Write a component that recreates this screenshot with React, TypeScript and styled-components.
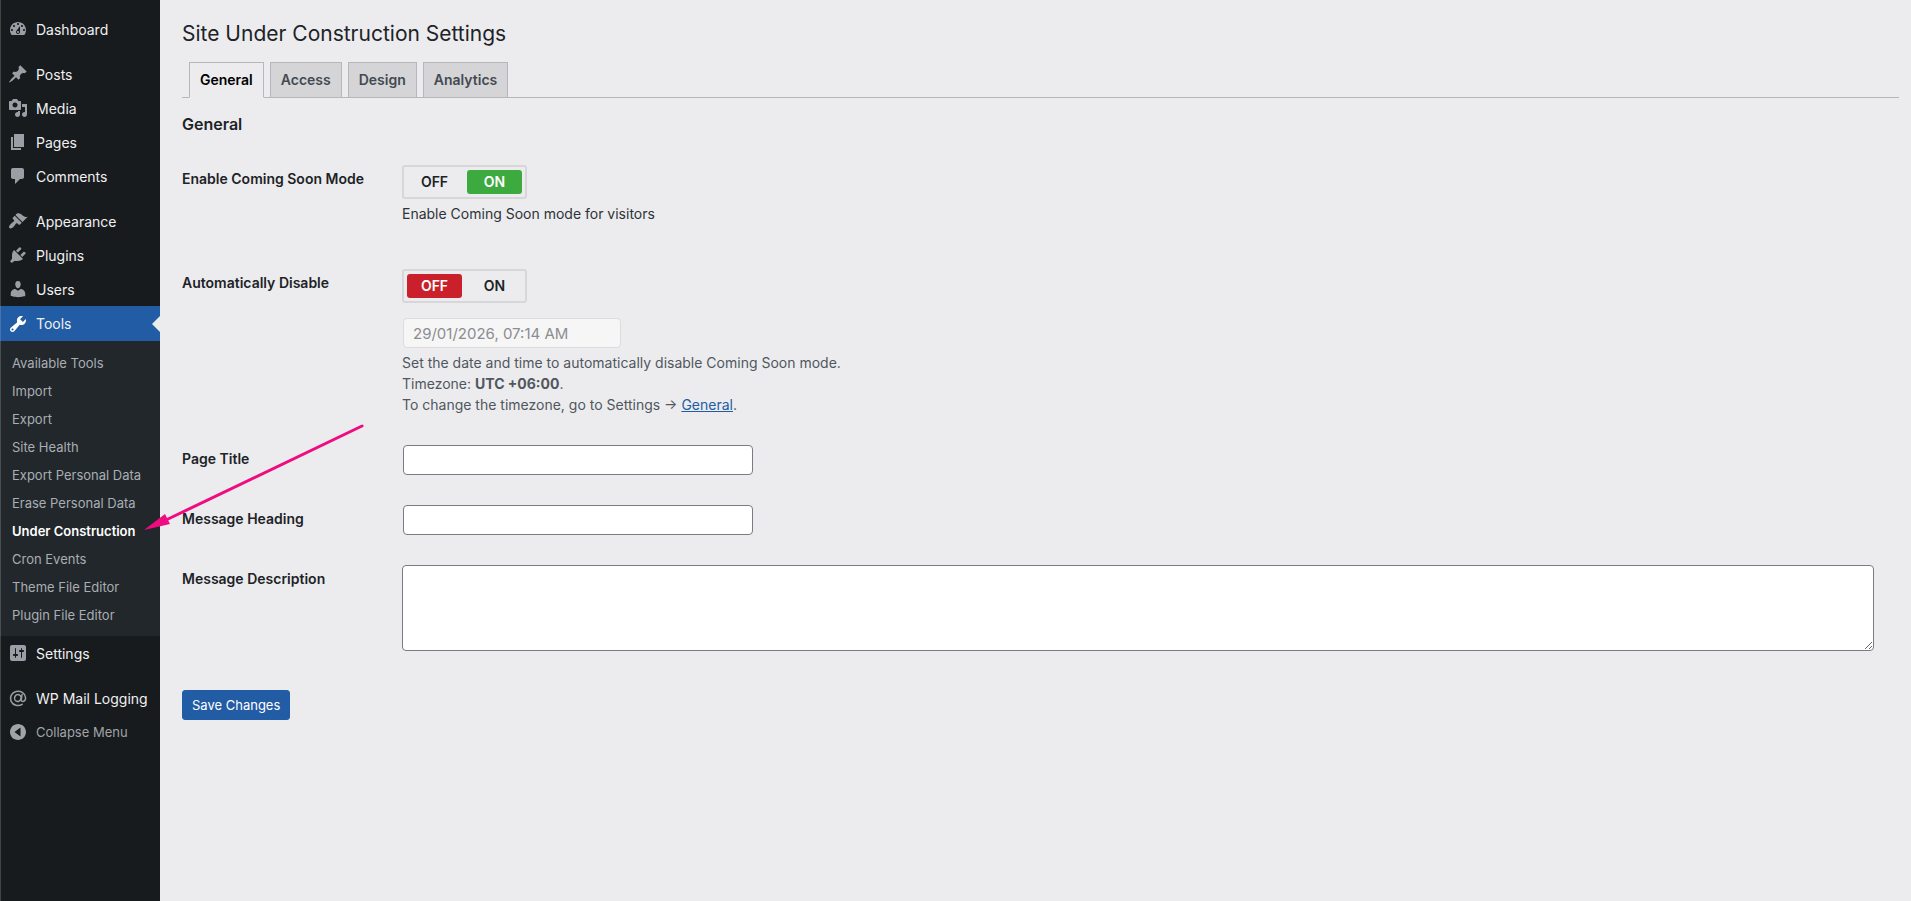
import React, { useState } from "react";
import styled, { createGlobalStyle, css } from "styled-components";

const GlobalStyle = createGlobalStyle`
  *, *::before, *::after { box-sizing: border-box; }
  body {
    margin: 0;
    background: #ececee;
    color: #1d2327;
    font-family: Inter, "Liberation Sans", sans-serif;
    font-size: 14px;
    line-height: 21px;
  }
  button, input, textarea { font: inherit; }
`;

const Layout = styled.div`
  display: flex;
  min-height: 100vh;
`;

/* ---------- Sidebar ---------- */

const Sidebar = styled.nav`
  position: relative;
  z-index: 1;
  flex: 0 0 160px;
  padding-top: 12px;
  background: #171b1e;

  &::after {
    content: "";
    position: absolute;
    inset: 0 auto 0 0;
    width: 1px;
    background: rgba(160, 170, 178, 0.3);
  }
`;

const MenuGroup = styled.ul`
  margin: 0 0 11px;
  padding: 0;
  list-style: none;
`;

const entryStyle = css`
  display: flex;
  align-items: center;
  gap: 8px;
  width: 100%;
  padding: 0 0 0 8px;
  border: 0;
  text-align: left;
  white-space: nowrap;
`;

const MenuLink = styled.a<{ $current?: boolean }>`
  ${entryStyle}
  position: relative;
  height: ${(p) => (p.$current ? "35px" : "34px")};
  color: #f0f0f1;
  background: ${(p) => (p.$current ? "#215ca5" : "transparent")};
  text-decoration: none;

  svg { color: ${(p) => (p.$current ? "#fff" : "#999fa5")}; }

  ${(p) =>
    p.$current &&
    css`
      &::after {
        content: "";
        position: absolute;
        top: 10px;
        right: 0;
        border: 8px solid transparent;
        border-left-width: 0;
        border-right-color: #ececee;
      }
    `}
`;

const CollapseButton = styled.button`
  ${entryStyle}
  height: 34px;
  background: none;
  color: #a0a4a8;
  font-size: 13px;
  cursor: pointer;
`;

const Icon = styled.svg`
  flex: none;
  width: 20px;
  height: 20px;
  fill: currentColor;
`;

const Submenu = styled.ul`
  margin: 0;
  padding: 8px 0 7px;
  background: #22272b;
  list-style: none;
`;

const SubmenuItem = styled.li`
  position: relative;
`;

const SubmenuLink = styled.a<{ $current?: boolean }>`
  display: block;
  padding-left: 12px;
  color: ${(p) => (p.$current ? "#fff" : "#a9aeb3")};
  font-size: 13px;
  font-weight: ${(p) => (p.$current ? 600 : 400)};
  line-height: 28px;
  text-decoration: none;
  white-space: nowrap;
`;

const Pointer = styled.svg`
  position: absolute;
  bottom: 13px;
  left: 144px;
  width: 222px;
  height: 110px;
  pointer-events: none;
`;

/* ---------- Main column ---------- */

const Main = styled.main`
  flex: 1;
  min-width: 0;
  padding: 19px 12px 40px 22px;
`;

const Title = styled.h1`
  margin: 0 0 13px;
  font-size: 21px;
  font-weight: 400;
  line-height: 30px;
`;

const Tabs = styled.nav`
  display: flex;
  gap: 6px;
  padding-left: 7px;
  border-bottom: 1px solid #b6b7ba;
`;

const Tab = styled.a<{ $active?: boolean }>`
  margin-bottom: ${(p) => (p.$active ? "-1px" : "0")};
  padding: 5px 10px;
  border: 1px solid #b6b7ba;
  border-bottom: ${(p) => (p.$active ? "1px solid #ececee" : "0")};
  background: ${(p) => (p.$active ? "#ececee" : "#d5d5d7")};
  color: ${(p) => (p.$active ? "#000" : "#434a51")};
  font-weight: 600;
  line-height: 24px;
  text-decoration: none;
`;

const SectionTitle = styled.h2`
  margin: 16px 0 31px;
  font-size: 16px;
  font-weight: 600;
  line-height: 20px;
`;

const Fields = styled.div`
  display: grid;
  gap: 30px;
  padding-right: 25px;
`;

const Row = styled.div`
  display: grid;
  grid-template-columns: 220px minmax(0, 1fr);
`;

const labelStyle = css`
  padding-top: 4px;
  font-weight: 600;
  line-height: 20px;
`;

const FieldLabel = styled.label`
  ${labelStyle}
`;

const FieldHeading = styled.span`
  ${labelStyle}
`;

const Control = styled.div<{ $roomy?: boolean }>`
  display: flex;
  flex-direction: column;
  align-items: flex-start;
  padding-bottom: ${(p) => (p.$roomy ? "15px" : "0")};
`;

const Switch = styled.div`
  display: flex;
  gap: 5px;
  padding: 3px;
  border: 2px solid #d7d7d9;
  border-radius: 3px;
`;

const SwitchOption = styled.label<{ $tone: string }>`
  position: relative;
  width: 55px;
  border-radius: 3px;
  font-weight: 600;
  line-height: 24px;
  text-align: center;
  cursor: pointer;

  &:has(input:checked) {
    background: ${(p) => p.$tone};
    color: #fff;
  }

  input {
    position: absolute;
    inset: 0;
    margin: 0;
    opacity: 0;
    cursor: pointer;
  }
`;

const Note = styled.p<{ $muted?: boolean }>`
  margin: 4px 0 0;
  color: ${(p) => (p.$muted ? "#50575e" : "#2c3338")};
`;

const NoteLink = styled.a`
  color: #215ca5;
`;

const TextField = styled.input`
  width: 350px;
  max-width: 100%;
  height: 30px;
  margin: 0 1px;
  padding: 0 8px;
  border: 1px solid #7b7c82;
  border-radius: 4px;
  background: #fff;
`;

const DateField = styled(TextField)`
  width: 218px;
  margin-top: 15px;
  padding: 0 9px;
  border-color: #dcdcde;
  background: #f6f6f6;
  color: #8b8d90;
  font-size: 15px;
`;

const TextArea = styled.textarea`
  width: 100%;
  height: 86px;
  padding: 2px 6px;
  border: 1px solid #7b7c82;
  border-radius: 4px;
  background: #fff;
  resize: vertical;
`;

const SaveButton = styled.button`
  height: 30px;
  margin-top: 39px;
  padding: 0 9px;
  border: 1px solid #215ca5;
  border-radius: 3px;
  background: #215ca5;
  color: #fff;
  font-size: 13px;
  cursor: pointer;
`;

/* ---------- Data ---------- */

const icons = {
  dashboard:
    "M3.76 16h12.48c1.1-1.37 1.76-3.11 1.76-5 0-4.42-3.58-8-8-8s-8 3.58-8 8c0 1.89.66 3.63 1.76 5zM10 4c.55 0 1 .45 1 1s-.45 1-1 1-1-.45-1-1 .45-1 1-1zM6 6c.55 0 1 .45 1 1s-.45 1-1 1-1-.45-1-1 .45-1 1-1zm8 0c.55 0 1 .45 1 1s-.45 1-1 1-1-.45-1-1 .45-1 1-1zm-5.37 5.55L12 7v6c0 1.1-.9 2-2 2s-2-.9-2-2c0-.57.24-1.08.63-1.45zM4 10c.55 0 1 .45 1 1s-.45 1-1 1-1-.45-1-1 .45-1 1-1zm12 0c.55 0 1 .45 1 1s-.45 1-1 1-1-.45-1-1 .45-1 1-1zm-5 3c0-.55-.45-1-1-1s-1 .45-1 1 .45 1 1 1 1-.45 1-1z",
  posts:
    "M10.44 3.02l1.82-1.82 6.36 6.35-1.83 1.82c-1.05-.68-2.48-.57-3.41.36l-.75.75c-.92.93-1.04 2.35-.35 3.41l-1.83 1.82-2.41-2.41-2.8 2.79c-.42.42-3.38 2.71-3.8 2.29s1.86-3.39 2.28-3.81l2.79-2.79L4.1 9.36l1.83-1.82c1.05.69 2.48.57 3.4-.36l.75-.75c.93-.92 1.05-2.35.36-3.41z",
  media:
    "M13 11V4c0-.55-.45-1-1-1h-1.67L9 1H5L3.67 3H2c-.55 0-1 .45-1 1v7c0 .55.45 1 1 1h10c.55 0 1-.45 1-1zM7 4.5c1.38 0 2.5 1.12 2.5 2.5S8.38 9.5 7 9.5 4.5 8.38 4.5 7 5.62 4.5 7 4.5zM14 6h5v10.5c0 1.38-1.12 2.5-2.5 2.5S14 17.88 14 16.5s1.12-2.5 2.5-2.5c.17 0 .34.02.5.05V9h-3V6zm-4 8.05V13h2v3.5c0 1.38-1.12 2.5-2.5 2.5S7 17.88 7 16.5 8.12 14 9.5 14c.17 0 .34.02.5.05z",
  pages: "M6 15V2h10v13H6zm-1 1h8v2H3V5h2v11z",
  comments:
    "M5 2h9c1.1 0 2 .9 2 2v7c0 1.1-.9 2-2 2h-2l-5 5v-5H5c-1.1 0-2-.9-2-2V4c0-1.1.9-2 2-2z",
  appearance:
    "M14.48 11.06L7.41 3.99l1.5-1.5c.5-.56 2.3-.47 3.51.32 1.21.8 1.43 1.28 2.91 2.1 1.18.64 2.45 1.26 4.45.85zm-.71.71L6.7 4.7 4.93 6.47c-.39.39-.39 1.02 0 1.41l1.06 1.06c.39.39.39 1.03 0 1.42-.6.6-1.43 1.11-2.21 1.69-.35.26-.7.53-1.01.84C1.43 14.23.4 16.08 1.4 17.07c.99 1 2.84-.03 4.18-1.36.31-.31.58-.66.85-1.02.57-.78 1.08-1.61 1.69-2.21.39-.39 1.02-.39 1.41 0l1.06 1.06c.39.39 1.02.39 1.41 0z",
  plugins:
    "M13.11 4.36L9.87 7.6 8 5.73l3.24-3.24c.35-.34 1.05-.2 1.56.32.52.51.66 1.21.31 1.55zm-8 1.77l.91-1.12 9.01 9.01-1.19.84c-.71.71-2.63 1.16-3.82 1.16H6.14L4.9 17.26c-.59.59-1.54.59-2.12 0-.59-.58-.59-1.53 0-2.12l1.24-1.24v-3.88c0-1.13.4-3.19 1.09-3.89zm7.26 3.97l3.24-3.24c.34-.35 1.04-.21 1.55.31.52.51.66 1.21.31 1.55l-3.24 3.25z",
  users:
    "M10 9.25c-2.27 0-2.73-3.44-2.73-3.44C7 4.02 7.82 2 9.97 2c2.16 0 2.98 2.02 2.71 3.81 0 0-.41 3.44-2.68 3.44zm0 2.57L12.72 10c2.39 0 4.52 2.33 4.52 4.53v2.49s-3.65 1.13-7.24 1.13c-3.65 0-7.24-1.13-7.24-1.13v-2.49c0-2.25 1.94-4.48 4.47-4.48z",
  tools:
    "M16.68 9.77c-1.34 1.34-3.3 1.67-4.95.99l-5.41 6.52c-.99.99-2.59.99-3.58 0s-.99-2.59 0-3.57l6.52-5.42c-.68-1.65-.35-3.61.99-4.95 1.28-1.28 3.12-1.62 4.72-1.06l-2.89 2.89 2.82 2.82 2.86-2.87c.53 1.58.18 3.39-1.08 4.65zM3.81 16.21c.4.39 1.04.39 1.43 0 .4-.4.4-1.04 0-1.43-.39-.4-1.03-.4-1.43 0-.39.39-.39 1.03 0 1.43z",
  settings:
    "M18 16V4c0-1.1-.9-2-2-2H4c-1.1 0-2 .9-2 2v12c0 1.1.9 2 2 2h12c1.1 0 2-.9 2-2zM8 11h1c.55 0 1 .45 1 1s-.45 1-1 1H8v1.5c0 .28-.22.5-.5.5s-.5-.22-.5-.5V13H6c-.55 0-1-.45-1-1s.45-1 1-1h1V5.5c0-.28.22-.5.5-.5s.5.22.5.5V11zm5-2h-1c-.55 0-1-.45-1-1s.45-1 1-1h1V5.5c0-.28.22-.5.5-.5s.5.22.5.5V7h1c.55 0 1 .45 1 1s-.45 1-1 1h-1v5.5c0 .28-.22.5-.5.5s-.5-.22-.5-.5V9z",
  collapse: "M10 2c4.42 0 8 3.58 8 8s-3.58 8-8 8-8-3.58-8-8 3.58-8 8-8zM12.5 5.5L6.5 10l6 4.5z",
};

type IconName = keyof typeof icons;

const contentMenu: [IconName, string][] = [
  ["posts", "Posts"],
  ["media", "Media"],
  ["pages", "Pages"],
  ["comments", "Comments"],
];

const siteMenu: [IconName, string][] = [
  ["appearance", "Appearance"],
  ["plugins", "Plugins"],
  ["users", "Users"],
];

const toolsMenu = [
  "Available Tools",
  "Import",
  "Export",
  "Site Health",
  "Export Personal Data",
  "Erase Personal Data",
  "Under Construction",
  "Cron Events",
  "Theme File Editor",
  "Plugin File Editor",
];

/* ---------- Pieces ---------- */

function Glyph({ name }: { name: IconName }) {
  return (
    <Icon viewBox="0 0 20 20" aria-hidden="true">
      <path fillRule="evenodd" d={icons[name]} />
    </Icon>
  );
}

function MailGlyph() {
  return (
    <Icon viewBox="0 0 20 20" aria-hidden="true">
      <g fill="none" stroke="currentColor" strokeWidth="1.5" strokeLinecap="round">
        <path d="M14.2 16.4A7.6 7.2 0 1 1 17.6 9.6C17.6 12 16.4 13.4 14.9 13.4 13.6 13.4 13.1 12.6 13.3 11.4L14 6.6" />
        <ellipse cx="9.8" cy="10" rx="3.2" ry="3.5" transform="rotate(18 9.8 10)" />
      </g>
    </Icon>
  );
}

function MenuEntry({ icon, label }: { icon: IconName; label: string }) {
  return (
    <li>
      <MenuLink href="#">
        <Glyph name={icon} />
        {label}
      </MenuLink>
    </li>
  );
}

function PointerArrow() {
  return (
    <Pointer viewBox="0 0 222 110" aria-hidden="true">
      <path d="M218 4L22 98" stroke="#ee0c80" strokeWidth="3" strokeLinecap="round" />
      <path d="M0 108L21 92L26 102Z" fill="#ee0c80" />
    </Pointer>
  );
}

function OnOffSwitch({ name, title, initial }: { name: string; title: string; initial: boolean }) {
  const [on, setOn] = useState(initial);
  return (
    <Switch role="radiogroup" aria-label={title}>
      <SwitchOption $tone="#c9202b">
        <input type="radio" name={name} checked={!on} onChange={() => setOn(false)} />
        OFF
      </SwitchOption>
      <SwitchOption $tone="#3daa40">
        <input type="radio" name={name} checked={on} onChange={() => setOn(true)} />
        ON
      </SwitchOption>
    </Switch>
  );
}

export default function App() {
  return (
    <>
      <GlobalStyle />
      <Layout>
        <Sidebar aria-label="Main menu">
          <MenuGroup>
            <MenuEntry icon="dashboard" label="Dashboard" />
          </MenuGroup>
          <MenuGroup>
            {contentMenu.map(([icon, label]) => (
              <MenuEntry key={label} icon={icon} label={label} />
            ))}
          </MenuGroup>
          <MenuGroup>
            {siteMenu.map(([icon, label]) => (
              <MenuEntry key={label} icon={icon} label={label} />
            ))}
            <li>
              <MenuLink href="#" $current>
                <Glyph name="tools" />
                Tools
              </MenuLink>
              <Submenu>
                {toolsMenu.map((label) => {
                  const current = label === "Under Construction";
                  return (
                    <SubmenuItem key={label}>
                      <SubmenuLink href="#" $current={current} aria-current={current ? "page" : undefined}>
                        {label}
                      </SubmenuLink>
                      {current && <PointerArrow />}
                    </SubmenuItem>
                  );
                })}
              </Submenu>
            </li>
            <MenuEntry icon="settings" label="Settings" />
          </MenuGroup>
          <MenuGroup>
            <li>
              <MenuLink href="#">
                <MailGlyph />
                WP Mail Logging
              </MenuLink>
            </li>
            <li>
              <CollapseButton type="button">
                <Glyph name="collapse" />
                Collapse Menu
              </CollapseButton>
            </li>
          </MenuGroup>
        </Sidebar>

        <Main>
          <Title>Site Under Construction Settings</Title>
          <Tabs aria-label="Settings sections">
            <Tab href="#" $active aria-current="page">General</Tab>
            <Tab href="#">Access</Tab>
            <Tab href="#">Design</Tab>
            <Tab href="#">Analytics</Tab>
          </Tabs>

          <form onSubmit={(e) => e.preventDefault()}>
            <SectionTitle>General</SectionTitle>
            <Fields>
              <Row>
                <FieldHeading>Enable Coming Soon Mode</FieldHeading>
                <Control $roomy>
                  <OnOffSwitch name="enabled" title="Enable Coming Soon Mode" initial />
                  <Note>Enable Coming Soon mode for visitors</Note>
                </Control>
              </Row>
              <Row>
                <FieldLabel htmlFor="disable-at">Automatically Disable</FieldLabel>
                <Control>
                  <OnOffSwitch name="auto-disable" title="Automatically Disable" initial={false} />
                  <DateField id="disable-at" type="text" defaultValue="29/01/2026, 07:14 AM" disabled />
                  <Note $muted>
                    Set the date and time to automatically disable Coming Soon mode.
                    <br />
                    Timezone: <strong>UTC +06:00</strong>.
                    <br />
                    To change the timezone, go to Settings → <NoteLink href="#">General</NoteLink>.
                  </Note>
                </Control>
              </Row>
              <Row>
                <FieldLabel htmlFor="page-title">Page Title</FieldLabel>
                <Control>
                  <TextField id="page-title" type="text" />
                </Control>
              </Row>
              <Row>
                <FieldLabel htmlFor="message-heading">Message Heading</FieldLabel>
                <Control>
                  <TextField id="message-heading" type="text" />
                </Control>
              </Row>
              <Row>
                <FieldLabel htmlFor="message-description">Message Description</FieldLabel>
                <Control>
                  <TextArea id="message-description" />
                </Control>
              </Row>
            </Fields>
            <SaveButton type="submit">Save Changes</SaveButton>
          </form>
        </Main>
      </Layout>
    </>
  );
}
